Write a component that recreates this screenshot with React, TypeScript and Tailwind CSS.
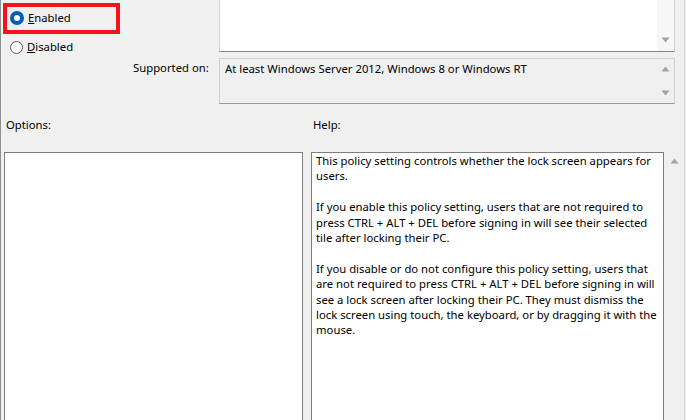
import { ReactNode } from "react"

const helpLines = [
  "This policy setting controls whether the lock screen appears for",
  "users.",
  "",
  "If you enable this policy setting, users that are not required to",
  "press CTRL + ALT + DEL before signing in will see their selected",
  "tile after locking their PC.",
  "",
  "If you disable or do not configure this policy setting, users that",
  "are not required to press CTRL + ALT + DEL before signing in will",
  "see a lock screen after locking their PC. They must dismiss the",
  "lock screen using touch, the keyboard, or by dragging it with the",
  "mouse.",
]

function ArrowUp() {
  return (
    <svg width="9" height="6" viewBox="0 0 9 6">
      <path d="M0.5 5.5 L4.5 0.5 L8.5 5.5 Z" fill="#a3a3a3" />
    </svg>
  )
}

function ArrowDown() {
  return (
    <svg width="9" height="6" viewBox="0 0 9 6">
      <path d="M0.5 0.5 L4.5 5.5 L8.5 0.5 Z" fill="#a3a3a3" />
    </svg>
  )
}

function Radio({ checked, children }: { checked?: boolean; children: ReactNode }) {
  return (
    <div className="flex items-center gap-[4px] h-[16px]">
      {checked ? (
        <span className="w-[14px] h-[14px] rounded-full bg-[#005fb8] flex items-center justify-center">
          <span className="w-[6px] h-[6px] rounded-full bg-white" />
        </span>
      ) : (
        <span className="w-[13px] h-[13px] rounded-full border border-[#5f5f5f] bg-[#f7f7f7]" />
      )}
      <span>{children}</span>
    </div>
  )
}

export default function App() {
  return (
    <div
      className="relative w-[686px] h-[420px] overflow-hidden bg-[#f0f0f0] text-[#000] border-l border-[#8f8f8f] text-[11.3px] leading-[16px]"
      style={{ fontFamily: '"Noto Sans", "Open Sans", sans-serif' }}
    >
      <div className="flex flex-col w-[684px] border-r border-[#d6d6d6] h-full">
        {/* top settings area */}
        <div className="flex">
          <div className="w-[218px] flex flex-col">
            <div className="pl-[9px] pt-[10px] flex flex-col gap-[13px]">
              <Radio checked>
                <span className="underline">E</span>nabled
              </Radio>
              <Radio>
                <span className="underline">D</span>isabled
              </Radio>
            </div>
            <div className="pl-[132px] pt-[5px]">Supported on:</div>
          </div>
          <div className="flex flex-col gap-[6px] pr-[9px] flex-1">
            <div className="h-[52px] bg-white border-l border-r border-b border-l-[#d4d4d4] border-r-[#d4d4d4] border-b-[#868686] flex justify-end">
              <div className="w-[17px] bg-[#f7f7f7] flex flex-col justify-end items-center pb-[8px]">
                <ArrowDown />
              </div>
            </div>
            <div className="h-[46px] bg-[#f0f0f0] border border-[#d0d0d0] border-b-[#9a9a9a] flex">
              <div className="flex-1 pl-[5px] pt-[2px]">
                At least Windows Server 2012, Windows 8 or Windows RT
              </div>
              <div className="w-[17px] flex flex-col justify-between items-center py-[7px]">
                <ArrowUp />
                <ArrowDown />
              </div>
            </div>
          </div>
        </div>

        {/* labels */}
        <div className="flex pt-[13px]">
          <div className="w-[309px] pl-[5px]">Options:</div>
          <div className="pl-[3px]">Help:</div>
        </div>

        {/* panes */}
        <div className="flex pt-[19px] flex-1">
          <div className="ml-[3px] w-[299px] bg-white border border-[#7d7d7d] h-[300px]" />
          <div className="ml-[8px] w-[353px] bg-white border border-[#7d7d7d] h-[300px] pl-[4px]">
            {helpLines.map((line, i) => (
              <div key={i} className="whitespace-nowrap h-[15.4px] leading-[15.4px]">
                {line || "\u00a0"}
              </div>
            ))}
          </div>
          <div className="flex-1 flex justify-center pt-[6px]">
            <ArrowUp />
          </div>
        </div>
      </div>

      {/* red highlight around Enabled */}
      <div className="absolute left-[2px] top-[3px] w-[117px] h-[31px] border-[4px] border-[#f5121c]" />
    </div>
  )
}
